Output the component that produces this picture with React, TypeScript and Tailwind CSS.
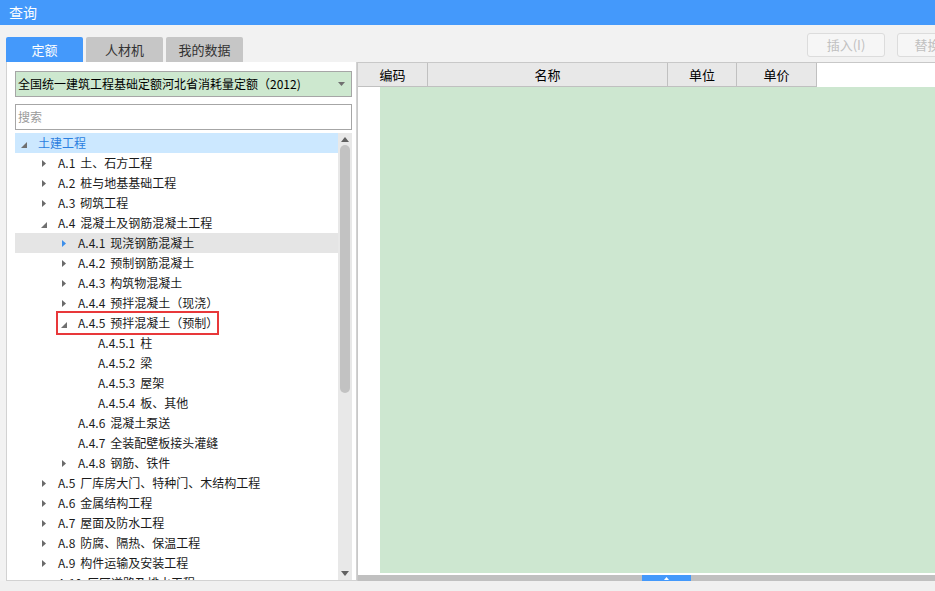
import React from "react";

type Node = {
  label: string;
  level: number;
  state: "open" | "closed" | "leaf";
  selected?: boolean;
  hover?: boolean;
  marked?: boolean;
};

const tree: Node[] = [
  { label: "土建工程", level: 0, state: "open", selected: true },
  { label: "A.1 土、石方工程", level: 1, state: "closed" },
  { label: "A.2 桩与地基基础工程", level: 1, state: "closed" },
  { label: "A.3 砌筑工程", level: 1, state: "closed" },
  { label: "A.4 混凝土及钢筋混凝土工程", level: 1, state: "open" },
  { label: "A.4.1 现浇钢筋混凝土", level: 2, state: "closed", hover: true },
  { label: "A.4.2 预制钢筋混凝土", level: 2, state: "closed" },
  { label: "A.4.3 构筑物混凝土", level: 2, state: "closed" },
  { label: "A.4.4 预拌混凝土（现浇）", level: 2, state: "closed" },
  { label: "A.4.5 预拌混凝土（预制）", level: 2, state: "open", marked: true },
  { label: "A.4.5.1 柱", level: 3, state: "leaf" },
  { label: "A.4.5.2 梁", level: 3, state: "leaf" },
  { label: "A.4.5.3 屋架", level: 3, state: "leaf" },
  { label: "A.4.5.4 板、其他", level: 3, state: "leaf" },
  { label: "A.4.6 混凝土泵送", level: 2, state: "leaf" },
  { label: "A.4.7 全装配壁板接头灌缝", level: 2, state: "leaf" },
  { label: "A.4.8 钢筋、铁件", level: 2, state: "closed" },
  { label: "A.5 厂库房大门、特种门、木结构工程", level: 1, state: "closed" },
  { label: "A.6 金属结构工程", level: 1, state: "closed" },
  { label: "A.7 屋面及防水工程", level: 1, state: "closed" },
  { label: "A.8 防腐、隔热、保温工程", level: 1, state: "closed" },
  { label: "A.9 构件运输及安装工程", level: 1, state: "closed" },
  { label: "A.10 厂区道路及排水工程", level: 1, state: "closed" },
];

const pad = ["pl-0", "pl-[20px]", "pl-[40px]", "pl-[60px]"];

function Expander({ state, blue }: { state: Node["state"]; blue?: boolean }) {
  if (state === "leaf") return <span className="w-[18px] shrink-0" />;
  if (state === "open")
    return (
      <span className="w-[18px] shrink-0 flex items-center justify-center pt-[4px]">
        <svg width="6" height="6" viewBox="0 0 6 6">
          <polygon points="6,0 6,6 0,6" fill="#707070" />
        </svg>
      </span>
    );
  return (
    <span className="w-[18px] shrink-0 flex items-center justify-center">
      <svg width="4" height="7" viewBox="0 0 4 7">
        <polygon points="0,0 4,3.5 0,7" fill={blue ? "#3d8fea" : "#6a6a6a"} />
      </svg>
    </span>
  );
}

function TreeRow({ node }: { node: Node }) {
  const bg = node.selected ? "bg-[#cce8ff]" : node.hover ? "bg-[#e5e5e5]" : "";
  const color = node.selected ? "text-[#2b7fe0]" : "text-[#1a1a1a]";
  const cut = node.label.indexOf(" ");
  const code = cut > 0 ? node.label.slice(0, cut) : "";
  const name = cut > 0 ? node.label.slice(cut + 1) : node.label;
  return (
    <div className={`relative h-[20px] shrink-0 flex items-center ${bg} ${pad[node.level]}`}>
      <Expander state={node.state} blue={node.hover} />
      <span className={`ml-[5px] leading-[20px] whitespace-nowrap ${color}`}>
        {code && <span className="mr-[5px]">{code}</span>}
        {name}
      </span>
      {node.marked && (
        <span className="absolute left-[41px] top-[-2px] w-[163px] h-[24px] border-2 border-[#e8383a]" />
      )}
    </div>
  );
}

export default function App() {
  return (
    <div className="w-[935px] h-[591px] overflow-hidden bg-[#f0f0f0] flex flex-col pb-[10px] font-['Noto_Sans_CJK_SC',sans-serif] text-[12px]">
      <div className="h-[25px] shrink-0 bg-[#4499fb] text-white text-[14px] pl-[9px] flex items-center">查询</div>

      <div className="flex flex-1 min-h-0 bg-[#f2f2f2]">
        {/* left column */}
        <div className="w-[351px] ml-[6px] shrink-0 flex flex-col pt-[12px]">
          <div className="flex gap-[3px] h-[25px] shrink-0 text-[13px]">
            <div className="w-[77px] rounded-t-[2px] bg-[#4499fb] text-white flex items-center justify-center">定额</div>
            <div className="w-[77px] rounded-t-[2px] bg-[#c6c6c6] text-[#333] flex items-center justify-center">人材机</div>
            <div className="w-[77px] rounded-t-[2px] bg-[#c6c6c6] text-[#333] flex items-center justify-center">我的数据</div>
          </div>

          <div className="flex-1 min-h-0 bg-white border-l border-b border-r border-[#d2d2d2] flex flex-col pt-[9px] pl-[8px] pr-[4px]">
            <div className="h-[26px] shrink-0 bg-[#cde8cf] border border-[#a6a6a6] flex items-center pl-[2px] pr-[6px]">
              <span className="flex-1 whitespace-nowrap text-black">全国统一建筑工程基础定额河北省消耗量定额（2012)</span>
              <svg width="7" height="4" viewBox="0 0 7 4">
                <polygon points="0,0 7,0 3.5,4" fill="#707070" />
              </svg>
            </div>
            <div className="h-[26px] mt-[7px] shrink-0 bg-white border border-[#a6a6a6] flex items-center pl-[2px] text-[#9a9a9a]">
              搜索
            </div>

            <div className="flex-1 min-h-0 mt-[3px] flex">
              <div className="flex-1 min-w-0 overflow-hidden flex flex-col">
                {tree.map((n) => (
                  <TreeRow key={n.label} node={n} />
                ))}
              </div>
              <div className="w-[14px] shrink-0 bg-[#e8e8e8] flex flex-col items-center">
                <svg className="mt-[4px]" width="8" height="5" viewBox="0 0 8 5">
                  <polygon points="4,0 8,5 0,5" fill="#606060" />
                </svg>
                <div className="mt-[3px] w-[10px] h-[248px] rounded-full bg-[#c2c2c2]" />
                <div className="flex-1" />
                <svg className="mb-[4px]" width="8" height="5" viewBox="0 0 8 5">
                  <polygon points="0,0 8,0 4,5" fill="#606060" />
                </svg>
              </div>
            </div>
          </div>
        </div>

        {/* right column */}
        <div className="flex-1 min-w-0 flex flex-col pt-[8px] overflow-hidden">
          <div className="h-[24px] shrink-0 flex gap-[12px] pl-[450px] text-[13px] text-[#c0c0c0]">
            <div className="w-[78px] shrink-0 rounded-[3px] border border-[#dcdcdc] bg-[#f6f6f6] flex items-center justify-center">插入(I)</div>
            <div className="w-[78px] shrink-0 rounded-[3px] border border-[#dcdcdc] bg-[#f6f6f6] flex items-center justify-center">替换(R)</div>
          </div>

          <div className="mt-[5px] flex-1 min-h-0 bg-white border-t border-l border-[#c8c8c8] flex flex-col">
            <div className="h-[24px] shrink-0 flex text-[13px] text-black">
              <div className="w-[70px] bg-[#e8e8e8] border-r border-b border-[#c0c0c0] flex items-center justify-center">编码</div>
              <div className="w-[240px] bg-[#e8e8e8] border-r border-b border-[#c0c0c0] flex items-center justify-center">名称</div>
              <div className="w-[69px] bg-[#e8e8e8] border-r border-b border-[#c0c0c0] flex items-center justify-center">单位</div>
              <div className="w-[80px] bg-[#e8e8e8] border-r border-b border-[#c0c0c0] flex items-center justify-center">单价</div>
            </div>
            <div className="flex-1 min-h-0 flex">
              <div className="w-[22px] shrink-0" />
              <div className="flex-1 bg-[#cde7d0]" />
            </div>
            <div className="h-[2px] shrink-0" />
            <div className="h-[6px] shrink-0 bg-[#c0c0c0] flex pl-[284px]">
              <div className="w-[49px] bg-[#4499fb] flex items-center justify-center">
                <svg width="5" height="3" viewBox="0 0 5 3">
                  <polygon points="2.5,0 5,3 0,3" fill="#ffffff" />
                </svg>
              </div>
            </div>
          </div>
        </div>
      </div>
    </div>
  );
}
